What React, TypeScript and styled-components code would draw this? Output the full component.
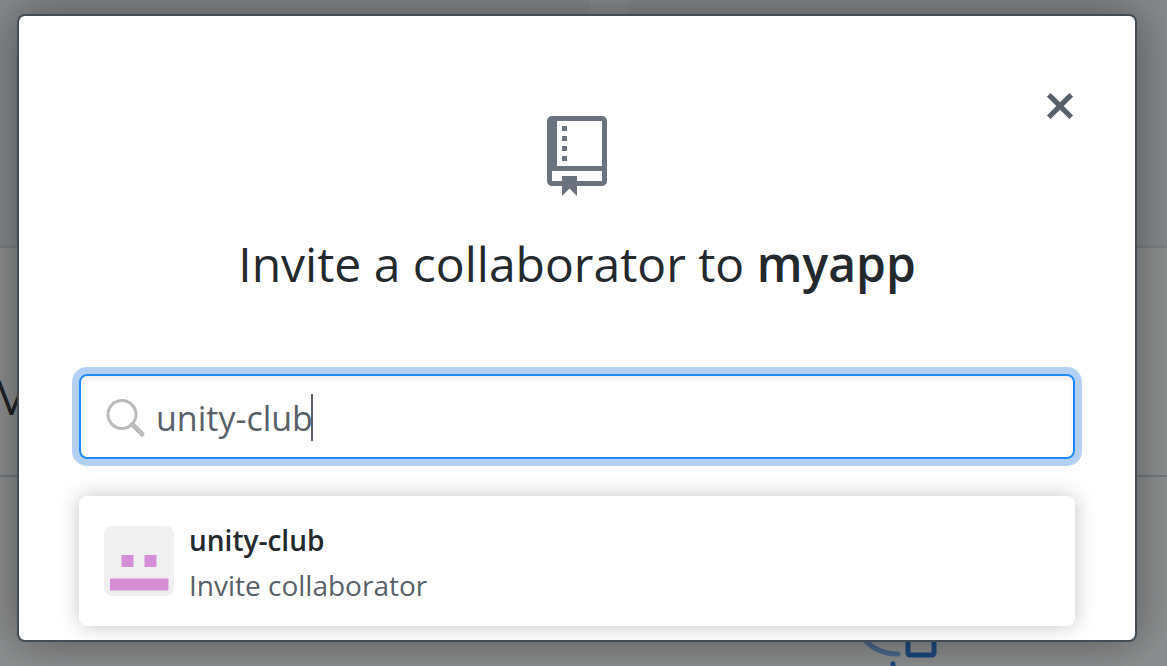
import React from "react";
import styled, { createGlobalStyle } from "styled-components";

const GlobalStyle = createGlobalStyle`
  *, *::before, *::after { box-sizing: border-box; }
  body {
    margin: 0;
    background: #ffffff;
    color: #24292e;
    font-family: "Segoe UI", "Open Sans", "Noto Sans", sans-serif;
  }
`;

const Stage = styled.div`
  display: grid;
  grid-template-columns: minmax(0, 1fr);
  min-height: 100vh;
  overflow: hidden;

  > * { grid-area: 1 / 1; }
`;

const Page = styled.div`
  display: flex;
  flex-direction: column;
`;

const TopBand = styled.div`
  display: flex;
  justify-content: center;
  height: 248px;
  padding-left: 51px;
  background: #f1f3f6;
  border-bottom: 3px solid #e1e4e8;
`;

const Tab = styled.div`
  width: 38px;
  height: 20px;
  background: #fafbfc;
`;

const AccessBand = styled.div`
  display: flex;
  align-items: flex-end;
  height: 229px;
  padding-bottom: 46px;
  border-bottom: 2px solid #d1d5da;
  overflow: hidden;
`;

const AccessTitle = styled.h1`
  margin: 0 0 0 -10px;
  font-size: 48px;
  line-height: 64px;
  font-weight: 400;
`;

const ArtBand = styled.div`
  flex: 1;
  display: flex;
  align-items: flex-end;
  padding-left: 74%;
`;

const Overlay = styled.div`
  display: flex;
  flex-direction: column;
  padding: 14px 30px 24px 17px;
  background: rgba(27, 29, 31, 0.5);
`;

const Dialog = styled.section`
  padding: 70px 60px 14px;
  background: #ffffff;
  border: 2px solid #444d56;
  border-radius: 8px;
  box-shadow: 0 0 45px rgba(0, 0, 0, 0.4);
`;

const DialogHeader = styled.header`
  display: grid;
  grid-template-columns: 1fr auto 1fr;
`;

const RepoIcon = styled.svg`
  grid-column: 2;
  display: block;
  width: 60px;
  height: 80px;
  margin-top: 30px;
  fill: #6a737d;
`;

const CloseButton = styled.button`
  grid-column: 3;
  justify-self: end;
  align-self: start;
  padding: 0;
  border: 0;
  background: none;
  color: #586069;
  cursor: pointer;

  svg {
    display: block;
    width: 30px;
    height: 40px;
    fill: currentColor;
  }
`;

const Title = styled.h2`
  margin: 30px 0 72px;
  text-align: center;
  font-size: 48px;
  line-height: 76px;
  font-weight: 400;

  strong { font-weight: 600; }
`;

const SearchField = styled.label`
  display: flex;
  align-items: center;
  height: 85px;
  padding: 2px 25px 0;
  border: 2px solid #2188ff;
  border-radius: 8px;
  box-shadow: inset 0 3px 5px rgba(27, 31, 35, 0.08),
    0 0 0 7px rgba(3, 102, 214, 0.3);
  cursor: text;

  svg {
    flex: none;
    width: 40px;
    height: 40px;
    margin-right: 10px;
  }
`;

const SearchInput = styled.input`
  field-sizing: content;
  padding: 0;
  border: 0;
  outline: 0;
  background: none;
  color: #586069;
  caret-color: transparent;
  font-family: inherit;
  font-size: 34px;
  line-height: 50px;
`;

const Caret = styled.span`
  width: 2px;
  height: 47px;
  margin-left: -2px;
  background: #586069;
`;

const Results = styled.ul`
  margin: 37px 0 0;
  padding: 0;
  list-style: none;
  border-radius: 8px;
  background: #ffffff;
  box-shadow: 0 0 20px rgba(0, 0, 0, 0.24);
`;

const ResultButton = styled.button`
  display: flex;
  align-items: center;
  gap: 15px;
  width: 100%;
  height: 130px;
  padding: 0 25px;
  border: 0;
  background: none;
  color: #24292e;
  text-align: left;
  font-family: inherit;
  font-size: 28px;
  line-height: 45px;
  cursor: pointer;
`;

const Avatar = styled.svg`
  flex: none;
  width: 70px;
  height: 70px;
  border-radius: 8px;
`;

const ResultText = styled.span`
  display: flex;
  flex-direction: column;
  padding-top: 4px;
`;

const ResultName = styled.span`
  font-weight: 600;
`;

const ResultHint = styled.span`
  color: #586069;
`;

export default function App() {
  return (
    <>
      <GlobalStyle />
      <Stage>
        <Page>
          <TopBand>
            <Tab />
          </TopBand>
          <AccessBand>
            <AccessTitle>M</AccessTitle>
          </AccessBand>
          <ArtBand>
            <svg width="76" height="46" viewBox="0 0 76 46" fill="none" strokeLinecap="round">
              <path d="M-6 12C6 28 18 34 34 34" stroke="#79b0f2" strokeWidth="5" />
              <rect x="44" y="8" width="26" height="27" rx="2" stroke="#1f74dc" strokeWidth="5" />
              <path d="M29 44V46" stroke="#1f74dc" strokeWidth="5" />
            </svg>
          </ArtBand>
        </Page>
        <Overlay>
          <Dialog role="dialog" aria-modal="true" aria-labelledby="invite-title">
            <DialogHeader>
              <RepoIcon viewBox="0 0 12 16" aria-hidden="true">
                <path
                  fillRule="evenodd"
                  d="M4 9H3V8h1v1zm0-3H3v1h1V6zm0-2H3v1h1V4zm0-2H3v1h1V2zm8-1v12c0 .55-.45 1-1 1H6v2l-1.5-1.5L3 16v-2H1c-.55 0-1-.45-1-1V1c0-.55.45-1 1-1h10c.55 0 1 .45 1 1zm-1 10H1v2h2v-1h3v1h5v-2zm0-10H2v9h9V1z"
                />
              </RepoIcon>
              <CloseButton type="button" aria-label="Close dialog">
                <svg viewBox="0 0 12 16" aria-hidden="true">
                  <path d="M7.48 8l3.75 3.75-1.48 1.48L6 9.48l-3.75 3.75-1.48-1.48L4.52 8 .77 4.25l1.48-1.48L6 6.52l3.75-3.75 1.48 1.48L7.48 8z" />
                </svg>
              </CloseButton>
            </DialogHeader>
            <Title id="invite-title">
              Invite a collaborator to <strong>myapp</strong>
            </Title>
            <SearchField>
              <svg viewBox="0 0 40 40" fill="none" stroke="#bbbbbb" aria-hidden="true">
                <circle cx="16" cy="16.500" r="14" strokeWidth="3" />
                <path d="M26.500 26.500L36 36" strokeWidth="5" strokeLinecap="round" />
              </svg>
              <SearchInput
                type="text"
                aria-label="Search for a collaborator"
                defaultValue="unity-club"
              />
              <Caret />
            </SearchField>
            <Results>
              <li>
                <ResultButton type="button">
                  <Avatar viewBox="0 0 70 70" aria-hidden="true">
                    <rect width="70" height="70" fill="#f0f0f0" />
                    <path
                      fill="#d48fd6"
                      d="M17.500 29h12v12h-12zM40.500 29h12v12h-12zM6 52.500h58.500v12H6z"
                    />
                  </Avatar>
                  <ResultText>
                    <ResultName>unity-club</ResultName>
                    <ResultHint>Invite collaborator</ResultHint>
                  </ResultText>
                </ResultButton>
              </li>
            </Results>
          </Dialog>
        </Overlay>
      </Stage>
    </>
  );
}
